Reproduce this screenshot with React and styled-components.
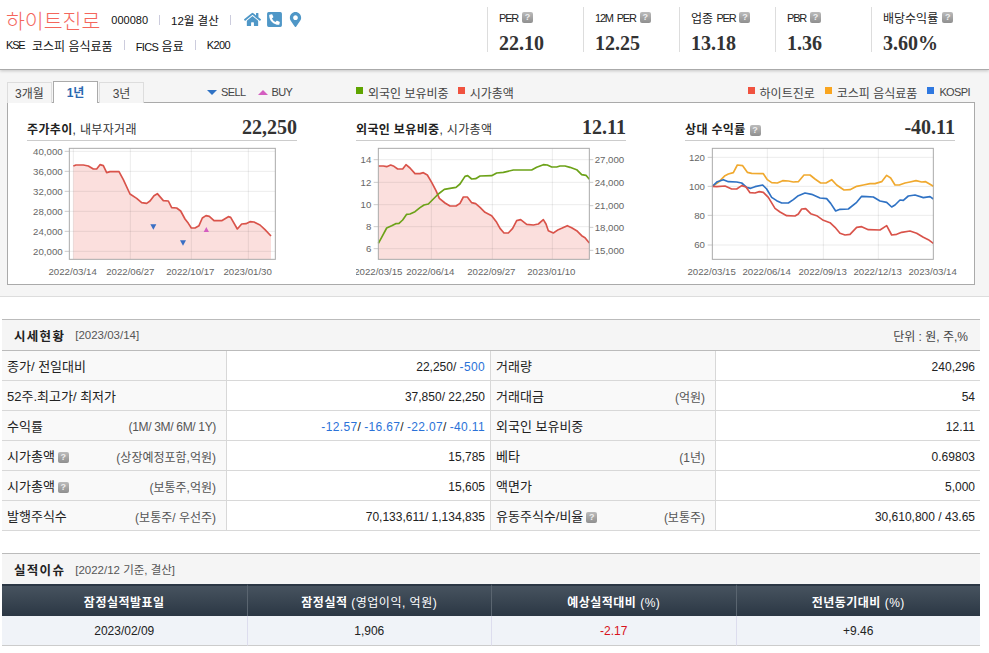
import React from 'react';
import styled, { createGlobalStyle } from 'styled-components';
import { FaHome, FaPhoneSquareAlt, FaMapMarkerAlt } from 'react-icons/fa';

const GlobalStyle = createGlobalStyle`
  html, body {
    margin: 0;
    padding: 0;
    background: #fff;
    font-family: "Liberation Sans", "Noto Sans CJK KR", sans-serif;
    font-size: 12px;
    color: #222;
  }
`;

const Minus = styled.span`
  color: #2b72d8;
  letter-spacing: 0.35px;
`;

// 헤더의 영문은 자간이 좁다
const Tight = styled.span`
  font-size: 11px;
  letter-spacing: ${({ $wide }) => ($wide ? '-0.6px' : '-1.2px')};
  word-spacing: 2px;
`;

const pts = (list) => list.map((p) => p.join(',')).join(' ');

// 차트 좌표는 모두 3배 스케일 기준
const priceLine = [[220,171],[228,168],[250,168],[265,171],[280,180],[290,180],[300,167],[310,170],[320,191],[330,188],[357,188],[370,212],[390,255],[410,268],[425,281],[440,283],[450,276],[462,260],[472,254],[490,275],[505,276],[515,296],[530,297],[542,306],[555,330],[565,343],[574,357],[585,357],[597,350],[607,327],[618,320],[628,322],[642,335],[665,335],[685,323],[692,325],[712,360],[725,345],[738,344],[750,338],[762,339],[780,348],[795,362],[813,381]];
const capLine = [[145,171],[160,171],[170,173],[182,168],[192,172],[203,180],[218,180],[228,167],[240,177],[255,194],[270,194],[280,191],[292,198],[305,220],[318,245],[328,268],[345,282],[360,291],[378,291],[390,283],[400,264],[412,264],[425,281],[437,284],[450,295],[465,310],[485,320],[500,340],[510,358],[522,372],[535,372],[548,358],[560,335],[572,332],[590,346],[610,348],[625,345],[640,332],[648,345],[655,365],[670,372],[685,362],[695,358],[712,350],[725,356],[740,365],[755,380],[765,386],[778,402]];
const foreignLine = [[145,403],[155,385],[170,357],[185,350],[197,344],[207,343],[218,333],[230,316],[240,315],[255,308],[270,296],[282,288],[295,285],[310,270],[325,255],[343,241],[360,238],[378,235],[390,225],[405,202],[413,200],[425,210],[437,209],[450,201],[485,200],[500,192],[520,190],[550,183],[605,183],[620,175],[640,167],[652,168],[665,174],[680,174],[690,171],[705,171],[720,175],[740,182],[755,197],[768,199],[778,211]];
const sectorLine = [[157,232],[175,220],[195,200],[205,195],[220,191],[232,168],[248,170],[262,190],[275,193],[310,194],[322,212],[335,221],[352,222],[368,215],[385,216],[400,219],[415,218],[432,198],[450,198],[465,210],[482,222],[498,222],[515,212],[530,228],[552,243],[570,242],[590,232],[610,228],[630,224],[645,224],[665,218],[680,199],[692,207],[705,228],[718,228],[735,222],[750,219],[768,215],[785,219],[797,218],[810,226],[820,232]];
const kospiLine = [[157,232],[172,218],[190,212],[205,218],[230,219],[245,222],[260,235],[272,238],[285,233],[308,228],[320,240],[335,265],[350,275],[365,282],[385,282],[400,272],[415,260],[435,252],[455,256],[480,267],[500,269],[512,283],[527,306],[540,301],[565,300],[590,280],[605,262],[620,263],[640,264],[660,276],[680,280],[695,294],[705,288],[720,273],[730,274],[745,261],[765,258],[790,266],[810,263],[820,270]];
const stockLine = [[157,232],[170,233],[195,231],[215,240],[230,240],[245,230],[258,234],[270,251],[285,252],[298,248],[310,250],[325,265],[345,298],[360,309],[380,320],[405,321],[415,315],[425,300],[437,299],[452,314],[470,320],[490,334],[510,341],[525,355],[540,373],[555,378],[570,376],[590,355],[605,353],[625,362],[660,363],[680,350],[695,378],[710,376],[725,370],[750,366],[770,373],[790,385],[805,392],[820,403]];

const charts = [
  {
    title: '주가추이', sub: ', 내부자거래', value: '22,250', originX: 81,
    frame: [208, 826],
    grid: [127, 187, 247, 307, 367, 427],
    vgrid: [220, 391, 574, 745],
    left: [['40,000', 127], ['36,000', 187], ['32,000', 247], ['28,000', 307], ['24,000', 367], ['20,000', 427]],
    leftX: 188,
    dates: [['2022/03/14', 218], ['2022/06/27', 391], ['2022/10/17', 571], ['2023/01/30', 743]],
    area: priceLine,
    lines: [[priceLine, '#d9534a']],
    sell: [[460, 353], [549, 401]],
    buy: [[619, 362]],
  },
  {
    title: '외국인 보유비중', sub: ', 시가총액', value: '12.11', originX: 78,
    frame: [145, 778],
    grid: [152, 220, 287, 353, 419],
    vgrid: [304, 487, 667],
    left: [['14', 152], ['12', 220], ['10', 287], ['8', 353], ['6', 419]],
    leftX: 124,
    right: [['27,000', 152], ['24,000', 220], ['21,000', 290], ['18,000', 355], ['15,000', 424]],
    dates: [['2022/03/15', 145], ['2022/06/14', 301], ['2022/09/27', 484], ['2023/01/10', 664]],
    area: capLine,
    lines: [[capLine, '#d9534a'], [foreignLine, '#6ca218']],
  },
  {
    title: '상대 수익률', help: true, value: '-40.11', originX: 75, visible: true,
    frame: [157, 820],
    grid: [145, 232, 319, 408],
    vgrid: [322, 490, 655],
    left: [['120', 145], ['100', 232], ['80', 319], ['60', 408]],
    leftX: 135,
    dates: [['2022/03/15', 155], ['2022/06/14', 320], ['2022/09/13', 488], ['2022/12/13', 653], ['2023/03/14', 818]],
    lines: [[sectorLine, '#f0a92f'], [kospiLine, '#2f72c4'], [stockLine, '#d9534a']],
  },
];

const stats = [
  { key: 'per', label: <Tight>PER</Tight>, value: '22.10' },
  { key: '12m', label: <Tight>12M PER</Tight>, value: '12.25' },
  { key: 'sector', label: <>업종 <Tight>PER</Tight></>, value: '13.18' },
  { key: 'pbr', label: <Tight>PBR</Tight>, value: '1.36' },
  { key: 'div', label: '배당수익률', value: '3.60%' },
];

const rows = [
  [
    { label: '종가/ 전일대비', value: <>22,250/ <Minus>-500</Minus></> },
    { label: '거래량', value: '240,296' },
  ],
  [
    { label: '52주.최고가/ 최저가', value: '37,850/ 22,250' },
    { label: '거래대금', note: '(억원)', value: '54' },
  ],
  [
    { label: '수익률', note: '(1M/ 3M/ 6M/ 1Y)', tightNote: true, value: <><Minus>-12.57</Minus>/ <Minus>-16.67</Minus>/ <Minus>-22.07</Minus>/ <Minus>-40.11</Minus></> },
    { label: '외국인 보유비중', value: '12.11' },
  ],
  [
    { label: '시가총액', help: true, note: '(상장예정포함,억원)', value: '15,785' },
    { label: '베타', note: '(1년)', value: '0.69803' },
  ],
  [
    { label: '시가총액', help: true, note: '(보통주,억원)', value: '15,605' },
    { label: '액면가', value: '5,000' },
  ],
  [
    { label: '발행주식수', note: '(보통주/ 우선주)', value: '70,133,611/ 1,134,835' },
    { label: '유동주식수/비율', help: true, note: '(보통주)', value: '30,610,800 / 43.65' },
  ],
];

const Chart = ({ c }) => {
  const [x0, x1] = c.frame;
  return (
    <ChartSvg $visible={c.visible} viewBox={`${c.originX} 96 810 414`}>
      {c.area && <polygon fill="#fbdfdd" points={`${c.area[0][0]},451 ${pts(c.area)} ${c.area[c.area.length - 1][0]},451`} />}
      {c.grid.map((y) => <line key={y} x1={x0} x2={x1} y1={y} y2={y} stroke="#000" strokeOpacity=".08" strokeWidth="3" />)}
      {c.vgrid.map((x) => <line key={x} x1={x} x2={x} y1={118} y2={451} stroke="#000" strokeOpacity=".08" strokeWidth="3" />)}
      {c.grid.map((y) => <line key={y} x1={x0 - 14} x2={x0} y1={y} y2={y} stroke="#ccc" strokeWidth="3" />)}
      {c.right && c.right.map(([, y]) => <line key={y} x1={x1} x2={x1 + 12} y1={y} y2={y} stroke="#ccc" strokeWidth="3" />)}
      {c.lines.map(([line, color]) => (
        <polyline key={color} points={pts(line)} fill="none" stroke={color} strokeWidth="5" strokeLinejoin="round" />
      ))}
      {(c.sell || []).map(([x, y]) => <polygon key={x} points={`${x - 9},${y - 7} ${x + 9},${y - 7} ${x},${y + 9}`} fill="#3a6fc4" />)}
      {(c.buy || []).map(([x, y]) => <polygon key={x} points={`${x - 8},${y + 7} ${x + 8},${y + 7} ${x},${y - 8}`} fill="#d45ec0" />)}
      <rect x={x0} y={118} width={x1 - x0} height={333} fill="none" stroke="#aaa" strokeWidth="3" />
      {c.left.map(([t, y]) => <AxisText key={t} x={c.leftX} y={y + 10} textAnchor="end">{t}</AxisText>)}
      {c.right && c.right.map(([t, y]) => <AxisText key={t} x={794} y={y + 10}>{t}</AxisText>)}
      {c.dates.map(([t, x]) => <AxisText key={t} x={x} y={497} textAnchor="middle">{t}</AxisText>)}
    </ChartSvg>
  );
};

const Help = () => <HelpBox>?</HelpBox>;

const LabelCell = ({ item }) => (
  <LabelTd>
    <LabelInner>
      <LabelText>{item.label}{item.help && <Help />}</LabelText>
      {item.note && <Note $tight={item.tightNote}>{item.note}</Note>}
    </LabelInner>
  </LabelTd>
);

const App = () => (
  <>
    <GlobalStyle />
    <Header>
      <Company>
        <NameRow>
          <Name>하이트진로</Name>
          <Code>000080</Code>
          <Bar />
          <Settle>12월 결산</Settle>
          <Bar />
          <Icons>
            <FaHome size={17} />
            <FaPhoneSquareAlt size={17} />
            <FaMapMarkerAlt size={15} />
          </Icons>
        </NameRow>
        <SubRow>
          <Market><Tight>KSE</Tight></Market>
          <span>코스피 음식료품</span>
          <Bar />
          <span><Tight $wide>FICS</Tight> 음료</span>
          <Bar />
          <Tight $wide>K200</Tight>
        </SubRow>
      </Company>
      <Stats>
        {stats.map((s) => (
          <Stat key={s.key}>
            <StatLabel>{s.label}<Help /></StatLabel>
            <StatValue>{s.value}</StatValue>
          </Stat>
        ))}
      </Stats>
    </Header>

    <ChartArea>
      <TabRow>
        <Tabs>
          <Tab>3개월</Tab>
          <Tab $active>1년</Tab>
          <Tab>3년</Tab>
        </Tabs>
        <TradeLegend>
          <LegendItem><Arrow $color="#2f72c4" $down /><Tight $wide>SELL</Tight></LegendItem>
          <LegendItem><Arrow $color="#d45ec0" /><Tight $wide>BUY</Tight></LegendItem>
        </TradeLegend>
        <LegendGroup>
          <LegendItem><Swatch $color="#5fa400" />외국인 보유비중</LegendItem>
          <LegendItem><Swatch $color="#f0523f" />시가총액</LegendItem>
        </LegendGroup>
        <LegendRight>
          <LegendItem><Swatch $color="#f0523f" />하이트진로</LegendItem>
          <LegendItem><Swatch $color="#f9a51f" />코스피 음식료품</LegendItem>
          <LegendItem><Swatch $color="#2f78e0" /><Tight $wide>KOSPI</Tight></LegendItem>
        </LegendRight>
      </TabRow>
      <ChartBox>
        {charts.map((c) => (
          <ChartPanel key={c.title}>
            <ChartHead>
              <ChartTitle><b>{c.title}</b>{c.sub}{c.help && <Help />}</ChartTitle>
              <ChartValue>{c.value}</ChartValue>
            </ChartHead>
            <Chart c={c} />
          </ChartPanel>
        ))}
      </ChartBox>
    </ChartArea>

    <Section>
      <SectionHead>
        <SectionTitle>시세현황</SectionTitle>
        <SectionDate>[2023/03/14]</SectionDate>
        <Unit>단위 : 원, 주,%</Unit>
      </SectionHead>
      <InfoTable>
        <colgroup>
          <col width="225" /><col width="264" /><col width="225" /><col width="264" />
        </colgroup>
        <tbody>
          {rows.map((row, i) => (
            <tr key={i}>
              {row.map((item) => (
                <React.Fragment key={item.label + i}>
                  <LabelCell item={item} />
                  <ValueTd>{item.value}</ValueTd>
                </React.Fragment>
              ))}
            </tr>
          ))}
        </tbody>
      </InfoTable>
    </Section>

    <Section>
      <SectionHead $short>
        <SectionTitle>실적이슈</SectionTitle>
        <SectionDate>[2022/12 기준, 결산]</SectionDate>
      </SectionHead>
      <IssueTable>
        <thead>
          <tr>
            <IssueTh>잠정실적발표일</IssueTh>
            <IssueTh>잠정실적 <Light>(영업이익, 억원)</Light></IssueTh>
            <IssueTh>예상실적대비 <Light>(%)</Light></IssueTh>
            <IssueTh>전년동기대비 <Light>(%)</Light></IssueTh>
          </tr>
        </thead>
        <tbody>
          <tr>
            <IssueTd>2023/02/09</IssueTd>
            <IssueTd>1,906</IssueTd>
            <IssueTd $red>-2.17</IssueTd>
            <IssueTd>+9.46</IssueTd>
          </tr>
        </tbody>
      </IssueTable>
    </Section>
  </>
);

export default App;

const Header = styled.header`
  display: flex;
  justify-content: space-between;
  height: 69px;
  background: #fff;
  border-bottom: 1px solid #aaa;
  box-shadow: 0 1px 3px rgba(0, 0, 0, 0.2);
  position: relative;
`;

const Company = styled.div`
  padding: 7px 0 0 6px;
`;

const NameRow = styled.div`
  display: flex;
  align-items: center;
  height: 25px;
  color: #111;
  font-size: 12px;
`;

const Name = styled.span`
  font-size: 20.5px;
  color: #f4665c;
  margin-right: 11px;
  font-weight: 300;
`;

const Code = styled.span`
  color: #111;
  font-size: 11px;
`;

const Settle = styled.span`
  font-size: 11.5px;
`;

const Bar = styled.i`
  display: inline-block;
  width: 1px;
  height: 10px;
  background: #ccd;
  margin: 0 11px;
`;

const Icons = styled.span`
  display: flex;
  align-items: center;
  gap: 5px;
  color: #4f97c7;
  margin-left: 2px;
`;

const SubRow = styled.div`
  display: flex;
  align-items: center;
  gap: 8px;
  margin-top: 6px;
  height: 14px;
  color: #111;

  ${Bar} {
    margin: 0 3px;
  }
`;

const Market = styled.span`
  width: 18px;
`;

const Stats = styled.div`
  display: flex;
  padding-top: 7px;
`;

const Stat = styled.div`
  width: 84px;
  height: 45px;
  padding-left: 11px;
  border-left: 1px solid #ddd;
  &:last-child {
    width: 106px;
  }
`;

const StatLabel = styled.div`
  display: flex;
  align-items: center;
  height: 21px;
  color: #222;
  white-space: pre;
`;

const StatValue = styled.div`
  margin-top: 4px;
  font: bold 20px "Liberation Serif", serif;
  color: #333;
`;

const HelpBox = styled.span`
  display: inline-block;
  width: 11px;
  height: 11px;
  margin-left: 4px;
  border-radius: 2px;
  background: linear-gradient(#bbb, #8f8f8f);
  color: #eee;
  font: bold 9px/11px "Liberation Sans", sans-serif;
  text-align: center;
  vertical-align: 1px;
`;

const ChartArea = styled.section`
  height: 227px;
  padding: 11px 14px 0 7px;
  background: #f5f5f5;
  border-bottom: 1px solid #ddd;
  box-sizing: border-box;
`;

const TabRow = styled.div`
  display: flex;
  align-items: flex-end;
  height: 21px;
  color: #444;
  font-size: 12px;
`;

const Tabs = styled.div`
  display: flex;
  gap: 1px;
  width: 200px;
  position: relative;
  top: 1px;
`;

const Tab = styled.div`
  width: 45px;
  height: ${({ $active }) => ($active ? '22px' : '21px')};
  line-height: 23px;
  box-sizing: border-box;
  text-align: center;
  font-weight: ${({ $active }) => ($active ? 700 : 400)};
  color: ${({ $active }) => ($active ? '#2b68b0' : '#444')};
  background: ${({ $active }) => ($active ? '#fff' : '#f5f5f5')};
  border: 1px solid ${({ $active }) => ($active ? '#aaa' : '#ddd')};
  border-bottom: 0;
  margin-top: ${({ $active }) => ($active ? '-1px' : '0')};
  z-index: ${({ $active }) => ($active ? 1 : 0)};
`;

const LegendItem = styled.span`
  display: flex;
  align-items: center;
  gap: 5px;
  height: 20px;
  padding-top: 2px;
`;

const TradeLegend = styled.div`
  display: flex;
  gap: 12px;
  width: 149px;

  ${LegendItem} {
    gap: 4px;
  }
`;

const LegendGroup = styled.div`
  display: flex;
  gap: 9px;
`;

const LegendRight = styled.div`
  display: flex;
  gap: 10px;
  margin-left: auto;
  padding-right: 5px;
`;

const Arrow = styled.i`
  width: 0;
  height: 0;
  border-left: 5px solid transparent;
  border-right: 5px solid transparent;
  border-top: ${({ $down, $color }) => ($down ? `5px solid ${$color}` : '0')};
  border-bottom: ${({ $down, $color }) => ($down ? '0' : `5px solid ${$color}`)};
`;

const Swatch = styled.i`
  width: 7px;
  height: 7px;
  background: ${({ $color }) => $color};
  margin-top: -3px;
`;

const ChartBox = styled.div`
  display: flex;
  gap: 59px;
  height: 183px;
  box-sizing: border-box;
  padding: 0 19px;
  background: #fff;
  border: 1px solid #aaa;
`;

const ChartPanel = styled.div`
  width: 270px;
  flex: none;
`;

const ChartHead = styled.div`
  display: flex;
  justify-content: space-between;
  align-items: center;
  height: 38px;
  padding-top: 12px;
  box-sizing: border-box;
  border-bottom: 1px solid #ccc;
`;

const ChartTitle = styled.div`
  color: #333;
  font-size: 12px;
  letter-spacing: 0.35px;
  padding-top: 2px;
  b {
    color: #222;
  }
`;

const ChartValue = styled.div`
  font: bold 20px "Liberation Serif", serif;
  color: #333;
`;

const ChartSvg = styled.svg`
  display: block;
  width: 270px;
  height: 138px;
  overflow: ${({ $visible }) => ($visible ? 'visible' : 'hidden')};
`;

const AxisText = styled.text`
  font-family: "Liberation Sans", sans-serif;
  font-size: 29px;
  fill: #666;
`;

const Section = styled.section`
  margin: 22px 9px 0 2px;
`;

const SectionHead = styled.div`
  display: flex;
  align-items: center;
  box-sizing: border-box;
  height: ${({ $short }) => ($short ? '31px' : '32px')};
  padding: 0 12px;
  background: #f5f5f5;
  border-top: 1px solid #bbb;
  border-bottom: ${({ $short }) => ($short ? '0' : '1px solid #bbb')};
`;

const SectionTitle = styled.strong`
  font-size: 12.5px;
  letter-spacing: 1.3px;
  color: #222;
  margin-right: 10px;
`;

const SectionDate = styled.span`
  color: #555;
  font-size: 11.5px;
`;

const Unit = styled.span`
  margin-left: auto;
  color: #444;
  font-size: 12px;
`;

const InfoTable = styled.table`
  width: 978px;
  table-layout: fixed;
  border-collapse: separate;
  border-spacing: 0;
`;

const LabelTd = styled.td`
  box-sizing: border-box;
  height: 30px;
  padding: 0 10px 0 5px;
  background: #f9f9f9;
  border-bottom: 1px solid #d8d8d8;
  border-right: 1px solid #d8d8d8;
`;

const LabelInner = styled.div`
  display: flex;
  justify-content: space-between;
  align-items: center;
`;

const LabelText = styled.span`
  font-size: 13px;
  color: #222;
  margin-top: -1px;

  ${HelpBox} {
    margin-left: 3px;
  }
`;

const Note = styled.span`
  font-size: 12px;
  color: #555;
  margin-top: 2px;
  letter-spacing: ${({ $tight }) => ($tight ? '-0.33px' : '0')};
`;

const ValueTd = styled.td`
  box-sizing: border-box;
  height: 30px;
  padding: 2px 5px 0 5px;
  text-align: right;
  color: #222;
  border-bottom: 1px solid #d8d8d8;
  border-right: 1px solid #d8d8d8;
  &:last-child {
    border-right: 0;
  }
`;

const IssueTable = styled.table`
  width: 978px;
  table-layout: fixed;
  border-collapse: separate;
  border-spacing: 0;
`;

const IssueTh = styled.th`
  box-sizing: border-box;
  height: 32px;
  padding: 0;
  color: #fff;
  font-size: 12px;
  font-weight: 700;
  letter-spacing: 0.5px;
  background: linear-gradient(#47535f, #2b3744);
  border-top: 2px solid #2b3744;
  border-left: 1px solid #5a6570;
  &:first-child {
    border-left: 0;
  }
`;

const Light = styled.span`
  font-weight: 400;
`;

const IssueTd = styled.td`
  box-sizing: border-box;
  height: 30px;
  text-align: center;
  background: #f0f3f8;
  color: ${({ $red }) => ($red ? '#d8121c' : '#222')};
  border-left: 1px solid #dde;
  border-bottom: 1px solid #ccc;
  &:first-child {
    border-left: 0;
  }
`;
